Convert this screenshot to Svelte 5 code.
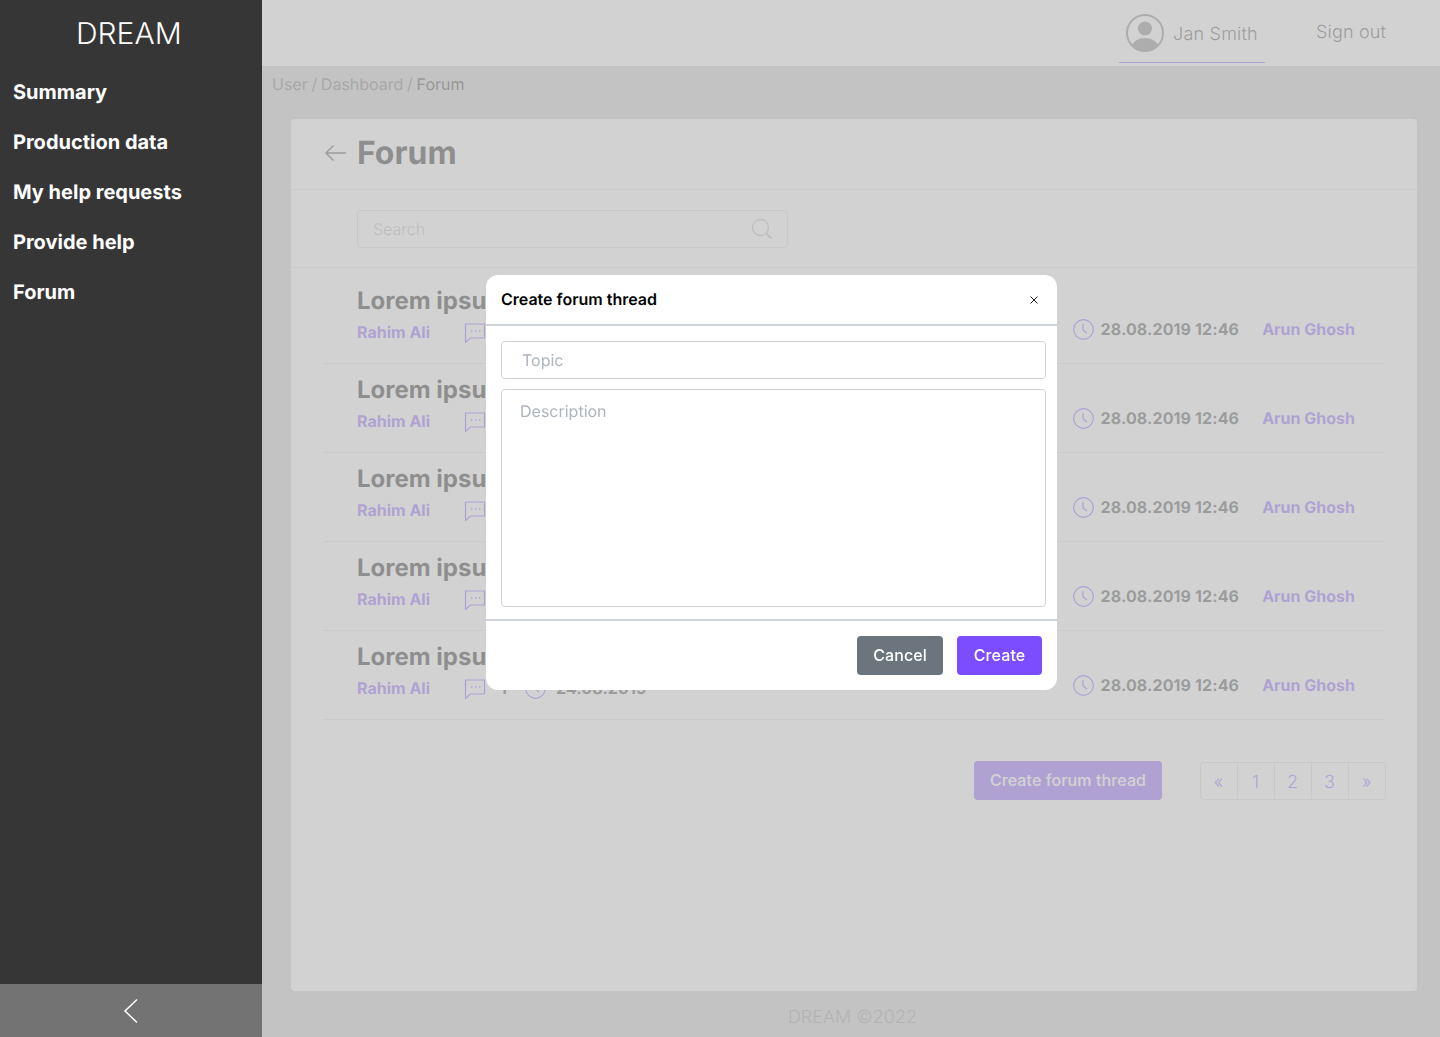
<script>
  const menu = ['Summary', 'Production data', 'My help requests', 'Provide help', 'Forum'];
  const threads = [1, 2, 3, 4, 5];
  const pages = ['«', '1', '2', '3', '»'];
</script>

<div class="page">
  <aside class="sidebar">
    <div class="logo">DREAM</div>
    <nav class="menu">
      {#each menu as item}
        <a class="menu-item" href="#top">{item}</a>
      {/each}
    </nav>
    <button class="collapse" aria-label="Collapse">
      <svg width="16" height="26" viewBox="0 0 16 26" fill="none" stroke="#fff" stroke-width="1.5">
        <path d="M14 1.5 2 13l12 11.5" />
      </svg>
    </button>
  </aside>

  <div class="main">
    <header class="topbar">
      <div class="user">
        <svg class="avatar" width="38" height="38" viewBox="0 0 38 38">
          <defs>
            <clipPath id="avatar-clip"><circle cx="19" cy="19" r="17.5" /></clipPath>
          </defs>
          <circle cx="19" cy="19" r="18" fill="none" stroke="#747474" stroke-width="2" />
          <circle cx="19" cy="14.5" r="7" fill="#747474" />
          <ellipse cx="19" cy="35" rx="14" ry="11" fill="#747474" clip-path="url(#avatar-clip)" />
        </svg>
        <span class="user-name">Jan Smith</span>
      </div>
      <a class="signout" href="#top">Sign out</a>
    </header>

    <div class="crumbs">User / Dashboard / <span class="crumb-current">Forum</span></div>

    <section class="card">
      <div class="card-head">
        <svg class="back" width="24" height="18" viewBox="0 0 24 18" fill="none" stroke="#333" stroke-width="1.4">
          <path d="M22 9H2M9.5 1.5 2 9l7.5 7.5" />
        </svg>
        <h1>Forum</h1>
      </div>

      <div class="search-row">
        <div class="search">
          <span>Search</span>
          <svg width="22" height="22" viewBox="0 0 22 22" fill="none" stroke="#b4b4b4" stroke-width="1.3">
            <circle cx="9.5" cy="9.5" r="8" />
            <path d="m15.5 15.5 5 5" stroke-width="2" />
          </svg>
        </div>
      </div>

      <div class="threads">
        {#each threads as t, i}
          <div class="thread" class:first={i === 0}>
            <div class="thread-info">
              <h2>Lorem ipsum dolor</h2>
              <div class="thread-meta">
                <span class="author">Rahim Ali</span>
                <svg class="comment" width="22" height="22" viewBox="0 0 22 22" fill="none" stroke="#7c4dff" stroke-width="1.2">
                  <path d="M1.5 3h19v14H6.500l-5 4.500z" />
                  <path d="M7 10h1.400M11 10h1.400M15 10h1.400" stroke-width="1.600" />
                </svg>
                <span class="count">1</span>
                <svg class="clock" width="21" height="21" viewBox="0 0 21 21" fill="none" stroke="#7c4dff" stroke-width="1.2">
                  <circle cx="10.500" cy="10.500" r="9.800" />
                  <path d="M10 5v6l4 3" />
                </svg>
                <span class="date">24.08.2019</span>
              </div>
            </div>
            <div class="thread-last">
              <svg class="clock-last" width="21" height="21" viewBox="0 0 21 21" fill="none" stroke="#7c4dff" stroke-width="1.2">
                <circle cx="10.500" cy="10.500" r="9.800" />
                <path d="M10 5v6l4 3" />
              </svg>
              <span class="date">28.08.2019 12:46</span>
              <span class="author last-author">Arun Ghosh</span>
            </div>
          </div>
        {/each}
      </div>

      <div class="card-foot">
        <button class="btn-thread">Create forum thread</button>
        <div class="pager">
          {#each pages as p}
            <span class="page-cell">{p}</span>
          {/each}
        </div>
      </div>
    </section>

    <footer class="footer">DREAM ©2022</footer>
  </div>

  <div class="backdrop"></div>

  <div class="modal">
    <div class="modal-head">
      <span class="modal-title">Create forum thread</span>
      <svg class="close" width="8" height="8" viewBox="0 0 8 8" stroke="#000" stroke-width="0.9">
        <path d="M.5.5l7 7M7.500.5l-7 7" />
      </svg>
    </div>
    <div class="modal-body">
      <div class="field topic">Topic</div>
      <div class="field description">Description</div>
    </div>
    <div class="modal-foot">
      <button class="btn cancel">Cancel</button>
      <button class="btn create">Create</button>
    </div>
  </div>
</div>

<style>
  :global(body) {
    margin: 0;
    font-family: Inter, "Liberation Sans", sans-serif;
    text-rendering: geometricPrecision;
  }

  .page {
    display: flex;
    height: 1037px;
    overflow: hidden;
    background: #c6c6c6;
  }

  .sidebar {
    position: relative;
    z-index: 3;
    flex: 0 0 262px;
    display: flex;
    flex-direction: column;
    background: #363636;
    color: #fff;
  }

  .logo {
    height: 67px;
    box-sizing: border-box;
    padding: 2px 0 0 76px;
    line-height: 65px;
    font-size: 30px;
    font-weight: 300;
  }

  .menu {
    flex: 1;
    display: flex;
    flex-direction: column;
  }

  .menu-item {
    height: 50px;
    line-height: 50px;
    padding-left: 13px;
    font-size: 20px;
    font-weight: 700;
    color: #fff;
    text-decoration: none;
  }

  .collapse {
    height: 53px;
    border: 0;
    padding: 0;
    background: #737373;
    display: flex;
    align-items: center;
    justify-content: center;
  }

  .main {
    flex: 1;
    min-width: 0;
    display: flex;
    flex-direction: column;
  }

  .topbar {
    height: 66px;
    flex: none;
    background: #fff;
    display: flex;
    justify-content: flex-end;
    align-items: flex-start;
    padding-right: 54px;
    box-sizing: border-box;
  }

  .user {
    width: 146px;
    height: 63px;
    box-sizing: border-box;
    border-bottom: 1px solid #7c4dff;
    display: flex;
    align-items: center;
    gap: 9px;
    padding: 3px 0 0 7px;
  }

  .user-name {
    font-size: 18px;
    font-weight: 300;
    letter-spacing: 0.2px;
    color: #333;
    margin-top: 3px;
  }

  .signout {
    margin: 22px 0 0 51px;
    font-size: 18px;
    line-height: 22px;
    font-weight: 300;
    letter-spacing: 0.15px;
    color: #333;
    text-decoration: none;
  }

  .crumbs {
    height: 53px;
    flex: none;
    box-sizing: border-box;
    padding: 8px 0 0 10px;
    font-size: 16px;
    line-height: 20px;
    word-spacing: -0.8px;
    color: #5f5f5f;
  }

  .crumb-current {
    color: #222;
  }

  .card {
    margin-left: 29px;
    width: 1126px;
    height: 872px;
    flex: none;
    box-sizing: border-box;
    background: #fff;
    border-radius: 4px;
  }

  .card-head {
    height: 71px;
    box-sizing: border-box;
    border-bottom: 1px solid #e6e6e6;
    display: flex;
    align-items: center;
    gap: 9px;
    padding: 0 0 4px 33px;
  }

  .back {
    margin-top: 2px;
  }

  .card-head h1 {
    margin: 0;
    font-size: 32px;
    font-weight: 700;
    color: #000;
  }

  .search-row {
    height: 78px;
    box-sizing: border-box;
    border-bottom: 1px solid #e6e6e6;
    padding: 20px 0 0 66px;
  }

  .search {
    width: 431px;
    height: 38px;
    box-sizing: border-box;
    border: 1px solid #d8d8d8;
    border-radius: 4px;
    display: flex;
    align-items: center;
    justify-content: space-between;
    padding: 0 14px 0 15px;
    font-size: 16px;
    font-weight: 300;
    color: #b0b0b0;
  }

  .threads {
    margin: 0 32px;
  }

  .thread {
    height: 89px;
    box-sizing: border-box;
    border-bottom: 1px solid #e6e6e6;
    display: flex;
    justify-content: space-between;
    align-items: center;
    padding: 0 30px 0 34px;
  }

  .thread.first {
    height: 96px;
    padding-top: 7px;
  }

  .thread-info {
    margin-top: -8px;
  }

  .thread h2 {
    margin: 0 0 5px;
    font-size: 24px;
    line-height: 29px;
    font-weight: 700;
    color: #000;
    white-space: nowrap;
  }

  .thread-meta {
    display: flex;
    align-items: center;
    height: 24px;
  }

  .author {
    font-size: 16px;
    font-weight: 700;
    color: #7c4dff;
  }

  .comment {
    margin-left: 34px;
  }

  .count {
    margin-left: 14px;
    font-size: 16px;
    font-weight: 700;
    color: #2d3436;
  }

  .clock {
    margin-left: 18px;
  }

  .date {
    margin-left: 10px;
    font-size: 16px;
    font-weight: 700;
    letter-spacing: 0.12px;
    color: #2d3436;
  }

  .thread-last {
    display: flex;
    align-items: center;
    margin-top: 19px;
  }

  .clock-last {
    margin-top: 2px;
  }

  .thread-last .date {
    margin-left: 6px;
  }

  .last-author {
    margin-left: 23px;
  }

  .card-foot {
    display: flex;
    justify-content: flex-end;
    align-items: flex-start;
    gap: 38px;
    margin-top: 41px;
    padding-right: 31px;
  }

  .btn-thread {
    width: 188px;
    height: 39px;
    border: 0;
    border-radius: 4px;
    padding: 0 0 2px;
    background: #7c4dff;
    color: #fff;
    font: 500 16px Inter, sans-serif;
    letter-spacing: 0.1px;
  }

  .pager {
    display: flex;
    margin-top: 1px;
    border: 1px solid #d8d8d8;
    border-radius: 4px;
  }

  .page-cell {
    width: 37px;
    height: 36px;
    box-sizing: border-box;
    border-left: 1px solid #d8d8d8;
    padding: 3px 1px 0 0;
    display: flex;
    align-items: center;
    justify-content: center;
    font-size: 18px;
    font-weight: 300;
    color: #7c4dff;
  }

  .page-cell:first-child {
    width: 36px;
    border-left: 0;
  }

  .footer {
    flex: 1;
    padding: 16px 0 0 0;
    margin-left: 3px;
    text-align: center;
    font-size: 18px;
    font-weight: 300;
    color: #8a8a8a;
  }

  .backdrop {
    position: fixed;
    inset: 0;
    z-index: 1;
    background: rgba(193, 193, 193, 0.733);
  }

  .modal {
    position: fixed;
    z-index: 2;
    left: 486px;
    top: 275px;
    width: 571px;
    height: 415px;
    background: #fff;
    border-radius: 12px;
    display: flex;
    flex-direction: column;
  }

  .modal-head {
    height: 51px;
    flex: none;
    box-sizing: border-box;
    border-bottom: 2px solid #ced4da;
    display: flex;
    align-items: center;
    justify-content: space-between;
    padding: 0 19px 2px 15px;
  }

  .close {
    margin-top: 2px;
  }

  .modal-title {
    font-size: 16px;
    font-weight: 600;
    color: #000;
  }

  .modal-body {
    height: 295px;
    flex: none;
    box-sizing: border-box;
    border-bottom: 2px solid #ced4da;
    padding: 15px 11px 0 15px;
    display: flex;
    flex-direction: column;
    gap: 10px;
  }

  .field {
    box-sizing: border-box;
    border: 1px solid #ced4da;
    border-radius: 4px;
    font-size: 16px;
    color: #adb5bd;
  }

  .topic {
    height: 38px;
    line-height: 36px;
    padding-left: 20px;
  }

  .description {
    height: 218px;
    padding: 11px 18px;
    line-height: 20px;
  }

  .modal-foot {
    flex: 1;
    display: flex;
    justify-content: flex-end;
    gap: 14px;
    padding: 15px 15px 0 0;
  }

  .btn {
    height: 39px;
    border: 0;
    border-radius: 4px;
    padding: 0 0 2px;
    color: #fff;
    font: 500 16px Inter, sans-serif;
    letter-spacing: 0.1px;
  }

  .cancel {
    width: 86px;
    background: #6c757d;
  }

  .create {
    width: 85px;
    background: #7c4dff;
  }
</style>
